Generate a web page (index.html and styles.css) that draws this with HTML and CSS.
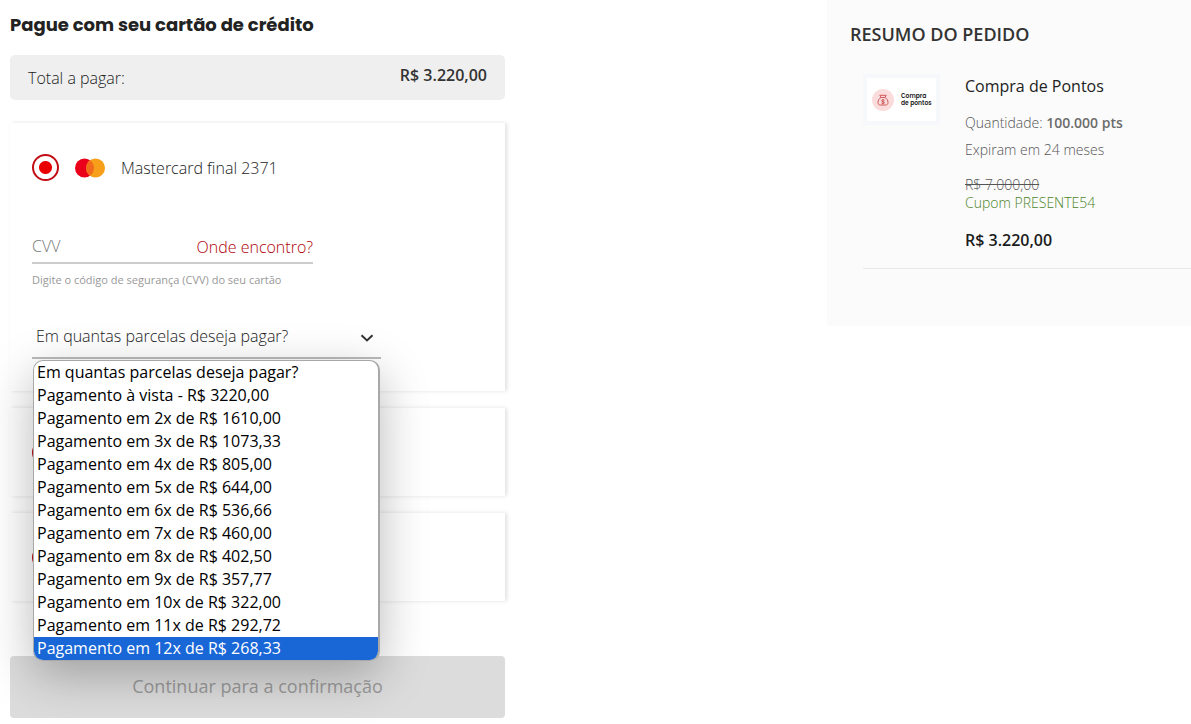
FILE: index.html
```html
<!DOCTYPE html>
<html lang="pt-BR">
<head>
<meta charset="utf-8">
<meta name="viewport" content="width=device-width, initial-scale=1">
<title>Pagamento</title>
<link rel="stylesheet" href="styles.css">
</head>
<body>
<div class="page">
  <main class="checkout">
    <h1 class="title">Pague com seu cartão de crédito</h1>
    <div class="total">
      <span>Total a pagar:</span>
      <strong class="total-value">R$ 3.220,00</strong>
    </div>
    <form class="cards">
      <section class="card card-open">
        <div class="card-head">
          <input class="radio" type="radio" name="card" id="card1" checked>
          <label class="card-label" for="card1">
            <svg class="brand" width="30" height="20" viewBox="0 0 30 20" aria-hidden="true">
              <circle cx="9.500" cy="10" r="9.500" fill="#eb001b"/>
              <circle cx="20.500" cy="10" r="9.500" fill="#f79e1b"/>
              <path d="M15 2.250a9.500 9.500 0 0 1 0 15.500a9.500 9.500 0 0 1 0-15.500z" fill="#f26a1b"/>
            </svg>
            Mastercard final 2371
          </label>
        </div>
        <div class="cvv">
          <div class="cvv-row">
            <input class="cvv-input" type="text" id="cvv" placeholder="CVV" aria-label="CVV" aria-describedby="cvv-hint">
            <a class="cvv-link" href="#">Onde encontro?</a>
          </div>
          <p class="hint" id="cvv-hint">Digite o código de segurança (CVV) do seu cartão</p>
        </div>
        <div class="parcelas">
          <select class="select" aria-label="Parcelas">
            <option>Em quantas parcelas deseja pagar?</option>
          </select>
          <svg class="chevron" width="14" height="8" viewBox="0 0 14 8" aria-hidden="true"><path d="M1.500 1.200L7 6.400l5.500-5.200" fill="none" stroke="#333" stroke-width="2"/></svg>
          <ul class="menu" role="listbox" aria-label="Opções de parcelas">
            <li class="option" role="option">Em quantas parcelas deseja pagar?</li>
            <li class="option" role="option">Pagamento à vista - R$ 3220,00</li>
            <li class="option" role="option">Pagamento em 2x de R$ 1610,00</li>
            <li class="option" role="option">Pagamento em 3x de R$ 1073,33</li>
            <li class="option" role="option">Pagamento em 4x de R$ 805,00</li>
            <li class="option" role="option">Pagamento em 5x de R$ 644,00</li>
            <li class="option" role="option">Pagamento em 6x de R$ 536,66</li>
            <li class="option" role="option">Pagamento em 7x de R$ 460,00</li>
            <li class="option" role="option">Pagamento em 8x de R$ 402,50</li>
            <li class="option" role="option">Pagamento em 9x de R$ 357,77</li>
            <li class="option" role="option">Pagamento em 10x de R$ 322,00</li>
            <li class="option" role="option">Pagamento em 11x de R$ 292,72</li>
            <li class="option option-active" role="option" aria-selected="true">Pagamento em 12x de R$ 268,33</li>
          </ul>
        </div>
      </section>
      <section class="card card-closed">
        <input class="radio" type="radio" name="card" aria-label="Cartão 2">
      </section>
      <section class="card card-closed">
        <input class="radio" type="radio" name="card" aria-label="Cartão 3">
      </section>
      <button class="submit" type="submit" disabled>Continuar para a confirmação</button>
    </form>
  </main>
  <aside class="summary">
    <h2 class="summary-title">RESUMO DO PEDIDO</h2>
    <div class="item">
      <div class="thumb">
        <svg width="22" height="22" viewBox="0 0 22 22" aria-hidden="true">
          <circle cx="11" cy="11" r="11" fill="#fbdcdc"/>
          <g fill="none" stroke="#d0595c" stroke-width="1">
            <path d="M9 8.500L7.800 6.300h6.400L13 8.500zM9 8.500c-2 1-3 2.900-3 5 0 1.700.9 2.500 2.300 2.500h5.400c1.400 0 2.300-.8 2.300-2.500 0-2.100-1-4-3-5"/>
            <path d="M12.500 11.200c-.6-.7-2.900-.7-2.900.5 0 1.300 2.900.6 2.900 1.900 0 1.200-2.300 1.200-3 .4M11 10.200v5"/>
          </g>
        </svg>
        <span class="thumb-text">Compra<br>de pontos</span>
      </div>
      <div class="details">
        <h3 class="item-name">Compra de Pontos</h3>
        <p class="meta">Quantidade: <strong>100.000 pts</strong></p>
        <p class="meta">Expiram em 24 meses</p>
        <p class="old"><s>R$ 7.000,00</s></p>
        <p class="coupon">Cupom PRESENTE54</p>
        <p class="price">R$ 3.220,00</p>
      </div>
    </div>
  </aside>
</div>
</body>
</html>
```

FILE: styles.css
```css
* {
  box-sizing: border-box;
}

body {
  margin: 0;
  background: #fff;
  color: #1c1c1c;
  font: 300 16px/24px "Open Sans", "Noto Sans", sans-serif;
}

h1, h2, h3, p, ul {
  margin: 0;
  padding: 0;
}

input, select, button {
  margin: 0;
  font: inherit;
  color: inherit;
}

.page {
  display: grid;
  grid-template-columns: minmax(0, 1fr) 364px;
  align-items: start;
}

.checkout {
  max-width: 515px;
  padding: 13px 10px 7px;
}

.title {
  color: #222;
  font: 700 18px/24px Poppins, Inter, sans-serif;
}

.total {
  display: flex;
  justify-content: space-between;
  margin-top: 18px;
  padding: 8px 18px 11px;
  border-radius: 5px;
  background: #efefef;
}

.total span {
  padding-top: 4px;
  line-height: 22px;
}

.total-value {
  color: #333;
  font-weight: 600;
  line-height: 24px;
}

.cards {
  display: flex;
  flex-direction: column;
  gap: 17px;
  margin-top: 23px;
}

.card {
  padding: 31px 22px 30px;
  background: #fff;
  box-shadow: 2px 0 4px rgba(0, 0, 0, 0.12);
}

.card-open {
  padding-bottom: 32px;
}

.card-closed {
  min-height: 87px;
}

.card-head, .card-label {
  display: flex;
  align-items: center;
  gap: 16px;
}

.card-label {
  line-height: 22px;
}

.radio {
  display: block;
  appearance: none;
  width: 27px;
  height: 27px;
  border: 2px solid #c20d14;
  border-radius: 50%;
  background: #fff;
}

.radio:checked {
  background: radial-gradient(circle, #e90000 6px, #fff 7px);
}

.cvv {
  width: 281px;
  margin-top: 53px;
}

.cvv-row {
  display: flex;
  justify-content: space-between;
  border-bottom: 2px solid #ccc;
}

.cvv-input {
  flex: 1;
  min-width: 0;
  height: 28px;
  padding: 0 0 4px;
  border: 0;
  background: none;
}

.cvv-input::placeholder {
  color: #777;
}

.cvv-link {
  padding-top: 1px;
  color: #b00008;
  line-height: 24px;
  text-decoration: none;
}

.hint {
  margin-top: 8px;
  color: #999;
  font-size: 11px;
  font-weight: 400;
  line-height: 16px;
}

.parcelas {
  position: relative;
  max-width: 349px;
  margin-top: 28px;
}

.select {
  display: block;
  appearance: none;
  width: 100%;
  height: 43px;
  padding: 0 4px 1px;
  border: 0;
  border-bottom: 2px solid #bbb;
  border-radius: 0;
  background: none;
}

.chevron {
  position: absolute;
  top: 18px;
  right: 7px;
}

.menu {
  position: absolute;
  z-index: 1;
  top: 44px;
  left: 1px;
  width: 347px;
  overflow: hidden;
  list-style: none;
  border: 1px solid #a8a8a8;
  border-right-width: 2px;
  border-radius: 10px;
  background: #fff;
  box-shadow: 0 14px 48px rgba(0, 0, 0, 0.28);
}

.option {
  padding: 0 3px;
  color: #000;
  font-weight: 400;
  line-height: 23px;
}

.option-active {
  background: #1967d7;
  color: #fff;
}

.submit {
  height: 62px;
  margin-top: 38px;
  padding-bottom: 3px;
  border: 0;
  border-radius: 4px;
  background: #dcdcdc;
  color: #999;
  font-size: 18px;
  font-weight: 400;
}

.summary {
  padding: 22px 0 57px 23px;
  background: #fbfbfb;
}

.summary-title {
  color: #333;
  font-size: 18px;
  font-weight: 600;
  line-height: 24px;
}

.item {
  display: flex;
  align-items: flex-start;
  gap: 25px;
  margin: 28px 0 0 13px;
  padding-bottom: 16px;
  border-bottom: 1px solid #e8e8e8;
}

.thumb {
  display: flex;
  align-items: center;
  gap: 7px;
  width: 77px;
  height: 51px;
  padding: 0 5px;
  border: 4px solid #f7f8fc;
  background: #fff;
}

.thumb svg {
  flex: none;
}

.thumb-text {
  color: #222;
  font: 600 6px/7px Poppins, Inter, sans-serif;
  white-space: nowrap;
}

.item-name {
  color: #222;
  font-size: 16px;
  font-weight: 400;
  line-height: 24px;
}

.meta {
  margin-top: 13px;
  color: #555;
  font-size: 14px;
  line-height: 24px;
}

.meta + .meta {
  margin-top: 3px;
}

.meta strong {
  color: #6c6c6c;
  font-weight: 600;
}

.old {
  margin-top: 14px;
  color: #555;
  font-size: 14px;
  line-height: 18px;
}

.coupon {
  color: #4a8428;
  font-size: 14px;
  line-height: 18px;
}

.price {
  margin-top: 16px;
  color: #1c1c1c;
  font-size: 16px;
  font-weight: 600;
  line-height: 24px;
}
```
